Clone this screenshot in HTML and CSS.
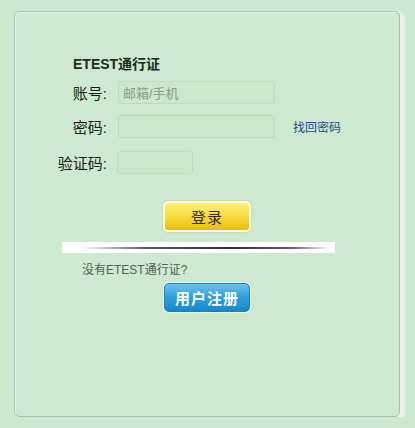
FILE: index.html
```html
<!DOCTYPE html>
<html lang="zh-CN">
<head>
<meta charset="utf-8">
<title>ETEST通行证</title>
<link rel="stylesheet" href="styles.css">
</head>
<body>
<div class="panel">
  <div class="title">ETEST通行证</div>
  <div class="row row1">
    <span class="label">账号:</span>
    <span class="input wide"><span class="ph">邮箱/手机</span></span>
  </div>
  <div class="row row2">
    <span class="label">密码:</span>
    <span class="input wide"></span>
    <a class="forgot">找回密码</a>
  </div>
  <div class="row row3">
    <span class="label">验证码:</span>
    <span class="input short"></span>
  </div>
  <div class="btnrow login-row"><span class="btn login">登录</span></div>
  <div class="divider"><span class="line"></span></div>
  <div class="noacc">没有ETEST通行证?</div>
  <div class="btnrow reg-row"><span class="btn reg">用户注册</span></div>
</div>
</body>
</html>
```
FILE: styles.css
```css
html, body {
  margin: 0;
  padding: 0;
  background: #cce9cf;
  font-family: "Liberation Sans", "Noto Sans CJK SC", sans-serif;
}
.panel {
  box-sizing: border-box;
  margin: 11px 0 0 14px;
  width: 386px;
  height: 406px;
  border: 1px solid #aebdb8;
  border-radius: 5px;
  background: #cde9cf;
  box-shadow: inset 1px 1px 0 rgba(255,255,255,0.45), 3px 3px 3px 2px rgba(240,245,242,0.85);
  padding: 44px 0 0 32px;
}
.title {
  margin-left: 26px;
  font-size: 14px;
  font-weight: bold;
  line-height: 16px;
  color: #1f2a22;
  height: 16px;
}
.row {
  display: flex;
  align-items: center;
  height: 23px;
}
.row1 { margin-top: 9px; }
.row2 { margin-top: 11px; }
.row3 { margin-top: 13px; }
.label {
  width: 60px;
  text-align: right;
  font-size: 15px;
  color: #1a1a1a;
  margin-right: 11px;
}
.input {
  box-sizing: border-box;
  display: flex;
  align-items: center;
  height: 23px;
  border: 1px solid #bfdcc3;
  border-radius: 3px;
  background: #cbe8cd;
  padding-left: 4px;
}
.wide { width: 157px; }
.short { width: 76px; margin-left: -1px; }
.ph {
  font-size: 13px;
  color: #8a9a8c;
}
.forgot {
  margin-left: 18px;
  font-size: 12px;
  color: #2a4c8c;
}
.btnrow {
  display: flex;
  padding-right: 32px;
  justify-content: center;
}
.login-row { margin-top: 27px; }
.btn {
  box-sizing: border-box;
  display: flex;
  align-items: center;
  justify-content: center;
  border-radius: 5px;
}
.login {
  width: 88px;
  height: 31px;
  border: 2px solid #fbfbe8;
  background: linear-gradient(#fdf178 0%, #f6dc3c 50%, #e9bd12 100%);
  font-size: 15px;
  color: #3b2c05;
  letter-spacing: 1px;
  box-shadow: 0 0 0 1px rgba(210,190,120,0.4);
}
.divider {
  margin: 10px 0 0 15px;
  width: 273px;
  height: 11px;
  background: #ffffff;
  display: flex;
  align-items: center;
}
.line {
  margin-left: 20px;
  width: 248px;
  height: 2px;
  background: linear-gradient(90deg, rgba(90,90,110,0) 0%, #5a5a70 25%, #2e2e40 60%, #6a5a80 85%, rgba(220,200,230,0) 100%);
}
.noacc {
  margin: 10px 0 0 35px;
  font-size: 12px;
  line-height: 14px;
  color: #555f57;
}
.reg-row { margin-top: 6px; }
.reg {
  width: 86px;
  height: 29px;
  border: 1px solid #1e7fbb;
  background: linear-gradient(#6cc2ee 0%, #2f9fdc 50%, #1589cc 100%);
  font-size: 15px;
  font-weight: bold;
  color: #ffffff;
  letter-spacing: 1px;
  box-shadow: 0 0 0 1px rgba(255,255,255,0.6);
}
```
